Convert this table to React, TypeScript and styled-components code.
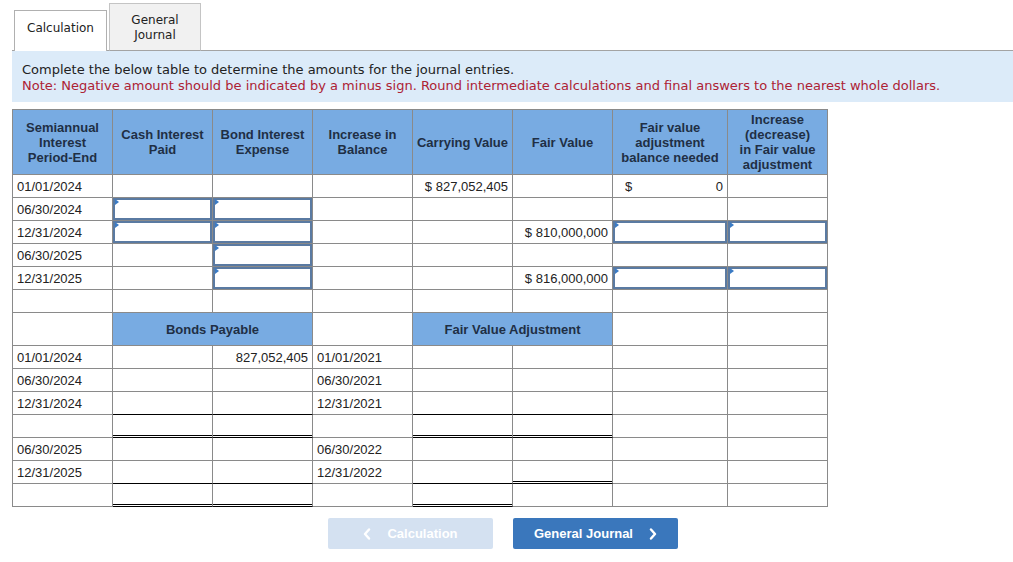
import React from "react";
import styled, { createGlobalStyle, css } from "styled-components";

const GlobalStyle = createGlobalStyle`
  html, body { margin: 0; padding: 0; background: #fff; }
  body { font-family: "Liberation Sans", Arial, sans-serif; color: #222; }
`;

const Page = styled.div`
  padding: 3px 0 0 12px;
  width: 1001px;
`;

const TabBar = styled.div`
  display: flex;
  align-items: flex-end;
  gap: 2px;
  padding-left: 2px;
  border-bottom: 1px solid #a3a3a3;
`;

const Tab = styled.div<{ $active?: boolean }>`
  box-sizing: border-box;
  display: flex;
  align-items: center;
  justify-content: center;
  text-align: center;
  font-family: "DejaVu Sans", Verdana, sans-serif;
  font-size: 12px;
  line-height: 15px;
  color: #222;
  margin-bottom: -1px;
  border: 1px solid #c4c4c4;
  border-bottom: none;
  ${(p) =>
    p.$active
      ? css`
          width: 93px;
          height: 41px;
          padding-bottom: 6px;
          background: #fff;
          border-color: #b0b0b0;
        `
      : css`
          width: 92px;
          height: 48px;
          padding-top: 2px;
          background: #f1f1f1;
          border-bottom: 1px solid #a3a3a3;
        `}
`;

const InfoBox = styled.div`
  background: #dcebf9;
  padding: 11px 10px 8px;
  font-family: "DejaVu Sans", Verdana, sans-serif;
  font-size: 13px;
  line-height: 16px;
  color: #222;
`;

const Note = styled.div`
  color: #ad2234;
`;

const Grid = styled.table`
  margin-top: 7px;
  border-collapse: separate;
  border-spacing: 0;
  table-layout: fixed;
  width: 816px;
  border-top: 1px solid #8a8a8a;
  border-left: 1px solid #8a8a8a;
  font-size: 13px;
`;

const Row = styled.tr<{ $h: number }>`
  height: ${(p) => p.$h}px;
`;

type Rule = "under" | "double" | undefined;

const Cell = styled.td<{ $align?: "left" | "right" | "center"; $head?: boolean; $rule?: Rule }>`
  box-sizing: border-box;
  position: relative;
  padding: 0 4px;
  border-right: 1px solid #8a8a8a;
  border-bottom: 1px solid #8a8a8a;
  text-align: ${(p) => p.$align || "left"};
  vertical-align: middle;
  white-space: nowrap;
  color: #222;
  line-height: 15px;
  ${(p) =>
    p.$head &&
    css`
      background: #78abe2;
      font-weight: bold;
      color: #1f2f45;
      text-align: center;
      padding: 0 2px;
    `}
  ${(p) =>
    p.$rule === "under" &&
    css`
      border-bottom-color: #000;
    `}
  ${(p) =>
    p.$rule === "double" &&
    css`
      border-bottom-color: #000;
      box-shadow: inset 0 -1px 0 #fff, inset 0 -2px 0 #000;
    `}
`;

const InputCell = styled.td`
  box-sizing: border-box;
  position: relative;
  padding: 0;
  border-right: 1px solid #8a8a8a;
  border-bottom: 1px solid #8a8a8a;
`;

const AnswerInput = styled.input`
  display: block;
  box-sizing: border-box;
  width: 100%;
  height: 22px;
  margin: 0;
  border: 2px solid #5a7aa2;
  background: #fff;
  font: 13px "Liberation Sans", Arial, sans-serif;
  text-align: right;
  padding: 0 4px;
  outline: none;
`;

const Marker = styled.span`
  position: absolute;
  left: 2px;
  top: 1px;
  width: 0;
  height: 0;
  border-top: 3px solid transparent;
  border-bottom: 3px solid transparent;
  border-left: 4px solid #3b7bc4;
  pointer-events: none;
`;

const Money = styled.div`
  display: flex;
  justify-content: space-between;
  padding: 0 0 0 8px;
`;

const Footer = styled.div`
  display: flex;
  justify-content: center;
  gap: 20px;
  margin-top: 11px;
  padding-right: 19px;
`;

const NavButton = styled.button<{ $disabled?: boolean }>`
  box-sizing: border-box;
  width: 165px;
  height: 31px;
  border: none;
  border-radius: 2px;
  display: flex;
  align-items: center;
  justify-content: center;
  gap: 16px;
  font: bold 13px "Liberation Sans", Arial, sans-serif;
  color: #fff;
  background: ${(p) => (p.$disabled ? "#d4e1f1" : "#3a77bc")};
  cursor: ${(p) => (p.$disabled ? "default" : "pointer")};
  padding: 0;
`;

const Chevron = ({ dir }: { dir: "left" | "right" }) => (
  <svg width="8" height="12" viewBox="0 0 8 12" aria-hidden="true">
    <polyline
      points={dir === "left" ? "6,1.5 2,6 6,10.5" : "2,1.5 6,6 2,10.5"}
      fill="none"
      stroke="#fff"
      strokeWidth="2.4"
      strokeLinecap="round"
      strokeLinejoin="round"
    />
  </svg>
);

type C =
  | { k: "blank"; rule?: Rule }
  | { k: "text"; v: string; align?: "left" | "right"; rule?: Rule }
  | { k: "input" }
  | { k: "money"; v: string };

const B: C = { k: "blank" };
const I: C = { k: "input" };
const t = (v: string, align: "left" | "right" = "left"): C => ({ k: "text", v, align });
const u: C = { k: "blank", rule: "under" };
const d: C = { k: "blank", rule: "double" };

const topRows: C[][] = [
  [t("01/01/2024"), B, B, B, t("$ 827,052,405", "right"), B, { k: "money", v: "0" }, B],
  [t("06/30/2024"), I, I, B, B, B, B, B],
  [t("12/31/2024"), I, I, B, B, t("$ 810,000,000", "right"), I, I],
  [t("06/30/2025"), B, I, B, B, B, B, B],
  [t("12/31/2025"), B, I, B, B, t("$ 816,000,000", "right"), I, I],
  [B, B, B, B, B, B, B, B],
];

const lowerRows: C[][] = [
  [t("01/01/2024"), B, t("827,052,405", "right"), t("01/01/2021"), B, B, B, B],
  [t("06/30/2024"), B, B, t("06/30/2021"), B, B, B, B],
  [t("12/31/2024"), u, u, t("12/31/2021"), u, u, B, B],
  [B, d, d, B, d, d, B, B],
  [t("06/30/2025"), B, B, t("06/30/2022"), B, B, B, B],
  [t("12/31/2025"), u, u, t("12/31/2022"), u, d, B, B],
  [B, d, d, B, d, B, B, B],
];

const colWidths = [100, 100, 100, 100, 100, 100, 115, 100];

const headers: React.ReactNode[] = [
  <>Semiannual<br />Interest<br />Period-End</>,
  <>Cash Interest<br />Paid</>,
  <>Bond Interest<br />Expense</>,
  <>Increase in<br />Balance</>,
  <>Carrying Value</>,
  <>Fair Value</>,
  <>Fair value<br />adjustment<br />balance needed</>,
  <>Increase<br />(decrease)<br />in Fair value<br />adjustment</>,
];

const renderCell = (c: C, i: number) => {
  switch (c.k) {
    case "input":
      return (
        <InputCell key={i}>
          <AnswerInput aria-label="answer" />
          <Marker />
        </InputCell>
      );
    case "text":
      return (
        <Cell key={i} $align={c.align} $rule={c.rule}>
          {c.v}
        </Cell>
      );
    case "money":
      return (
        <Cell key={i}>
          <Money>
            <span>$</span>
            <span>{c.v}</span>
          </Money>
        </Cell>
      );
    default:
      return <Cell key={i} $rule={c.rule} />;
  }
};

export default function App() {
  return (
    <>
      <GlobalStyle />
      <Page>
        <TabBar>
          <Tab $active>Calculation</Tab>
          <Tab>
            General
            <br />
            Journal
          </Tab>
        </TabBar>
        <InfoBox>
          <div>Complete the below table to determine the amounts for the journal entries.</div>
          <Note>
            Note: Negative amount should be indicated by a minus sign. Round intermediate calculations and final answers to the nearest whole dollars.
          </Note>
        </InfoBox>
        <Grid>
          <colgroup>
            {colWidths.map((w, i) => (
              <col key={i} style={{ width: w }} />
            ))}
          </colgroup>
          <tbody>
            <Row $h={65}>
              {headers.map((h, i) => (
                <Cell key={i} $head>
                  {h}
                </Cell>
              ))}
            </Row>
            {topRows.map((r, ri) => (
              <Row key={`t${ri}`} $h={23}>
                {r.map(renderCell)}
              </Row>
            ))}
            <Row $h={33}>
              <Cell />
              <Cell $head colSpan={2}>
                Bonds Payable
              </Cell>
              <Cell />
              <Cell $head colSpan={2}>
                Fair Value Adjustment
              </Cell>
              <Cell />
              <Cell />
            </Row>
            {lowerRows.map((r, ri) => (
              <Row key={`l${ri}`} $h={23}>
                {r.map(renderCell)}
              </Row>
            ))}
          </tbody>
        </Grid>
        <Footer>
          <NavButton $disabled disabled>
            <Chevron dir="left" />
            Calculation
          </NavButton>
          <NavButton>
            General Journal
            <Chevron dir="right" />
          </NavButton>
        </Footer>
      </Page>
    </>
  );
}
